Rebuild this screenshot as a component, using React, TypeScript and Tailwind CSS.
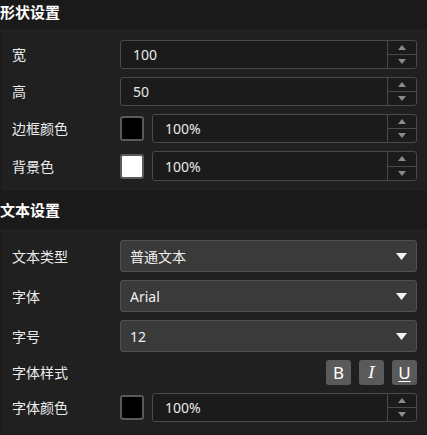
import React from "react";

const font = {
  fontFamily: '"Noto Sans", "Noto Sans CJK SC", sans-serif',
};

function Stepper() {
  return (
    <div className="flex w-[29px] flex-col border-l border-[#4a4a4a]">
      <button className="flex flex-1 items-center justify-center border-b border-[#4a4a4a]">
        <svg width="8" height="5" viewBox="0 0 8 5">
          <path d="M0 5 L4 0 L8 5 Z" fill="#8a8a8a" />
        </svg>
      </button>
      <button className="flex flex-1 items-center justify-center">
        <svg width="8" height="5" viewBox="0 0 8 5">
          <path d="M0 0 L8 0 L4 5 Z" fill="#8a8a8a" />
        </svg>
      </button>
    </div>
  );
}

function NumberInput({ value }: { value: string }) {
  return (
    <div className="flex h-full flex-1 rounded-[3px] border border-[#4a4a4a] bg-[#1b1b1b]">
      <div className="flex flex-1 items-center pl-[12px] text-[14px] text-[#e8e8e8]">
        {value}
      </div>
      <Stepper />
    </div>
  );
}

function Swatch({ color }: { color: string }) {
  return (
    <div
      className={`h-[25px] w-[24px] shrink-0 rounded-[3px] border-2 border-[#5a5a5a] ${color}`}
    />
  );
}

function ColorInput({ color }: { color: string }) {
  return (
    <div className="flex h-full flex-1 items-center gap-2">
      <Swatch color={color} />
      <NumberInput value="100%" />
    </div>
  );
}

function Select({ value }: { value: string }) {
  return (
    <div className="flex h-full flex-1 items-center justify-between rounded-[3px] border border-[#505050] bg-[#3a3a3a] pl-[9px] pr-[9px] text-[14px] text-[#f0f0f0]">
      <span>{value}</span>
      <svg width="11" height="7" viewBox="0 0 11 7">
        <path d="M0 0 L11 0 L5.5 7 Z" fill="#f4f4f4" />
      </svg>
    </div>
  );
}

function Row({
  label,
  height,
  children,
}: {
  label: string;
  height: string;
  children: React.ReactNode;
}) {
  return (
    <div className={`flex items-center ${height}`}>
      <div className="w-[119px] shrink-0 pl-[11px] text-[14px] text-[#ececec]">{label}</div>
      {children}
    </div>
  );
}

function StyleButton({ children }: { children: React.ReactNode }) {
  return (
    <button className="flex h-[25px] w-[25px] items-center justify-center rounded-[3px] bg-[#5a5a5a] text-[17px] leading-none text-white">
      {children}
    </button>
  );
}

function Header({ title, className = "" }: { title: string; className?: string }) {
  return (
    <div className={`flex items-center text-[15px] font-bold text-white ${className}`}>
      {title}
    </div>
  );
}

export default function App() {
  return (
    <div className="h-[435px] w-[427px] overflow-hidden bg-[#1a1a1a]" style={font}>
      <Header title="形状设置" className="h-[29px] pb-[5px]" />
      <div className="ml-px flex flex-col gap-2 bg-[#202020] pb-[10px] pr-[10px] pt-[11px]">
        <Row label="宽" height="h-[29px]">
          <NumberInput value="100" />
        </Row>
        <Row label="高" height="h-[29px]">
          <NumberInput value="50" />
        </Row>
        <Row label="边框颜色" height="h-[29px]">
          <ColorInput color="bg-black" />
        </Row>
        <Row label="背景色" height="h-[30px]">
          <ColorInput color="bg-white" />
        </Row>
      </div>
      <Header title="文本设置" className="h-[38px]" />
      <div className="ml-px flex h-[205px] flex-col gap-2 bg-[#202020] pr-[10px] pt-[11px]">
        <Row label="文本类型" height="h-[32px]">
          <Select value="普通文本" />
        </Row>
        <Row label="字体" height="h-[32px]">
          <Select value="Arial" />
        </Row>
        <Row label="字号" height="h-[32px]">
          <Select value="12" />
        </Row>
        <Row label="字体样式" height="h-[25px]">
          <div className="flex flex-1 justify-end gap-2">
            <StyleButton>B</StyleButton>
            <StyleButton>
              <span
                className="italic"
                style={{ fontFamily: '"DejaVu Serif", serif', fontWeight: 300 }}
              >
                I
              </span>
            </StyleButton>
            <StyleButton>
              <span className="underline underline-offset-2">U</span>
            </StyleButton>
          </div>
        </Row>
        <Row label="字体颜色" height="h-[29px]">
          <ColorInput color="bg-black" />
        </Row>
      </div>
    </div>
  );
}
